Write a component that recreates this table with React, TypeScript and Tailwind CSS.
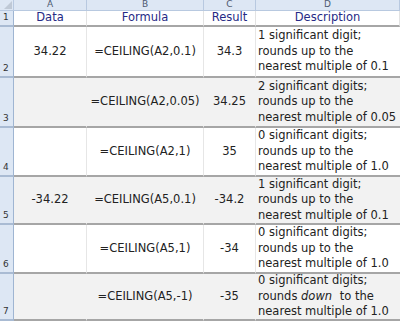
import React from 'react';

type Row = { n: number; data: string; formula: string; result: string; desc: React.ReactNode[]; shaded: boolean };

const rows: Row[] = [
    { n: 2, data: '34.22', formula: '=CEILING(A2,0.1)', result: '34.3', desc: ['1 significant digit;', 'rounds up to the', 'nearest multiple of 0.1'], shaded: false },
    { n: 3, data: '', formula: '=CEILING(A2,0.05)', result: '34.25', desc: ['2 significant digits;', 'rounds up to the', 'nearest multiple of 0.05'], shaded: true },
    { n: 4, data: '', formula: '=CEILING(A2,1)', result: '35', desc: ['0 significant digits;', 'rounds up to the', 'nearest multiple of 1.0'], shaded: false },
    { n: 5, data: '-34.22', formula: '=CEILING(A5,0.1)', result: '-34.2', desc: ['1 significant digit;', 'rounds up to the', 'nearest multiple of 0.1'], shaded: true },
    { n: 6, data: '', formula: '=CEILING(A5,1)', result: '-34', desc: ['0 significant digits;', 'rounds up to the', 'nearest multiple of 1.0'], shaded: false },
    {
        n: 7, data: '', formula: '=CEILING(A5,-1)', result: '-35', shaded: true,
        desc: ['0 significant digits;', <>rounds <i className="pr-1">down</i> to the</>, 'nearest multiple of 1.0'],
    },
];

const colHead = 'flex items-center justify-center bg-[#dde7f4] border-r border-b border-[#b8c9e0] text-[9px] text-[#4d5a70]';
const rowHead = 'flex items-end pl-[3px] pb-[1px] bg-[#dde7f4] border-r border-b-2 border-r-[#9fb5d2] border-b-[#a9bbd3] text-[9px] text-[#333]';

const App: React.FC = () => {
    return (
        <div className="w-[400px] h-[322px] overflow-hidden bg-white font-['DejaVu_Sans',Verdana,sans-serif] text-[11.5px] text-[#222]">
            <div className="grid grid-cols-[14px_73px_117px_52px_144px] grid-rows-[11px_16px_51px_50px_49px_48px_49px_47px]">
                {/* corner + column letters */}
                <div className="relative bg-[#dde7f4] border-r border-b border-[#b8c9e0]">
                    <svg className="absolute right-[1px] bottom-[1px]" width="8" height="8"><polygon points="8,0 8,8 0,8" fill="#bfc9d6" /></svg>
                </div>
                <div className={colHead}>A</div>
                <div className={colHead}>B</div>
                <div className={colHead}>C</div>
                <div className={colHead}>D</div>

                {/* row 1 headings */}
                <div className={rowHead}>1</div>
                {['Data', 'Formula', 'Result', 'Description'].map(h => (
                    <div key={h} className="flex items-center justify-center border-r border-r-[#e3e3e3] border-b-2 border-b-[#a6a6a6] text-[#262a86] leading-none">
                        {h}
                    </div>
                ))}

                {rows.map(r => {
                    const bg = r.shaded ? 'bg-[#f2f2f2]' : 'bg-white';
                    const cell = `flex items-center justify-center border-b-2 border-b-[#a6a6a6] border-r ${r.shaded ? 'border-r-[#f2f2f2]' : 'border-r-[#e6e6e6]'} ${bg}`;
                    return (
                        <React.Fragment key={r.n}>
                            <div className={rowHead}>{r.n}</div>
                            <div className={cell}>{r.data}</div>
                            <div className={cell}>{r.formula}</div>
                            <div className={cell}>{r.result}</div>
                            <div className={`flex flex-col justify-center pl-[2px] leading-[15.5px] whitespace-nowrap border-b-2 border-b-[#a6a6a6] ${bg}`}>
                                {r.desc.map((l, i) => <div key={i}>{l}</div>)}
                            </div>
                        </React.Fragment>
                    );
                })}
            </div>
        </div>
    );
};

export default App;
